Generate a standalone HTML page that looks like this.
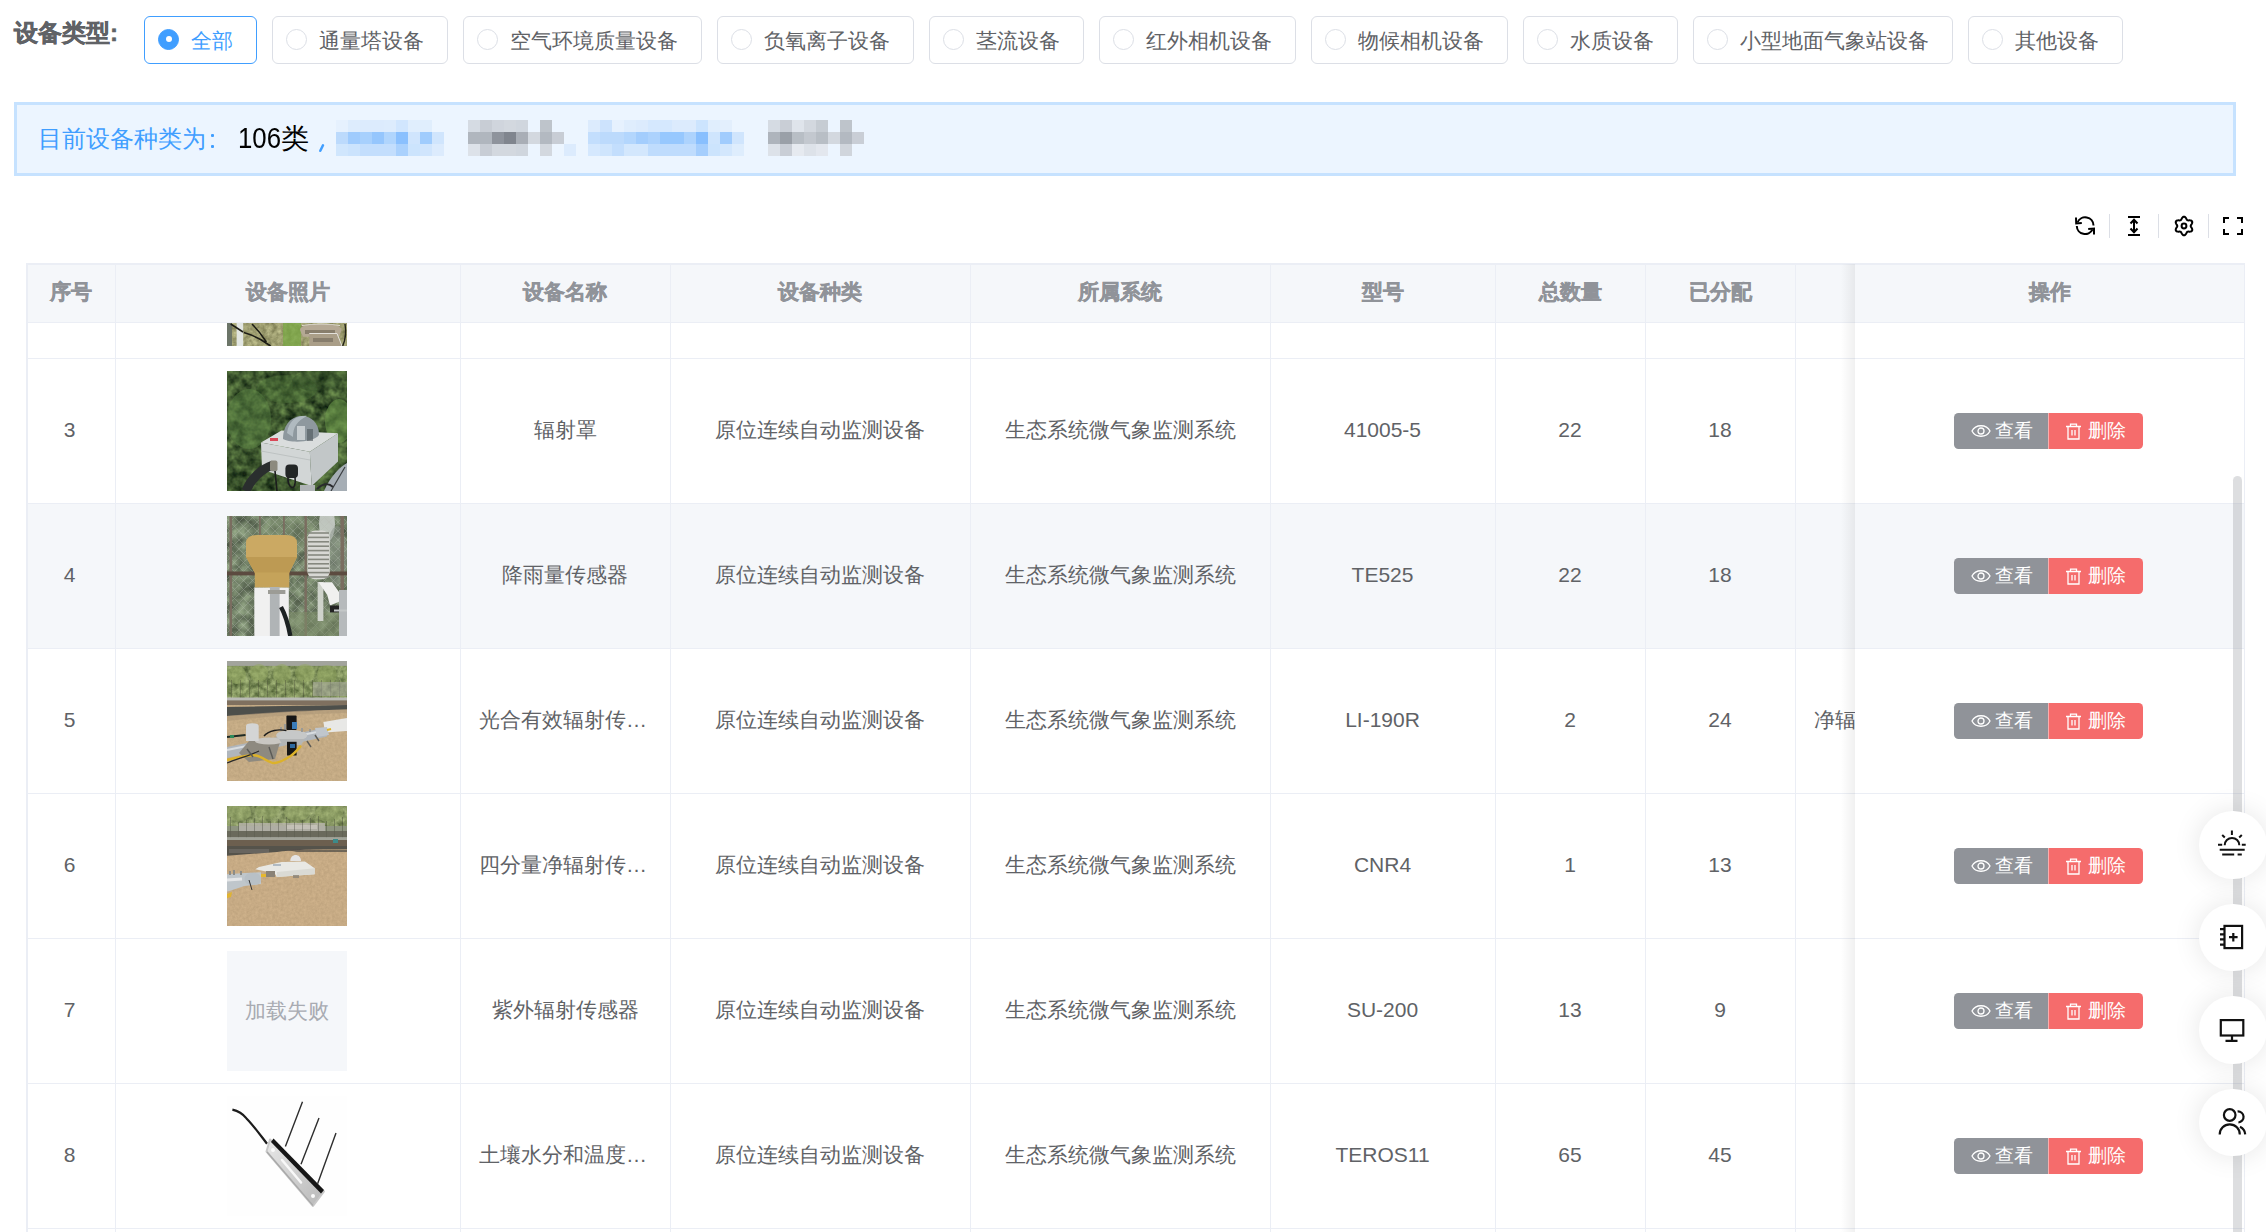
<!DOCTYPE html><html><head><meta charset='utf-8'><style>
*{box-sizing:border-box;margin:0;padding:0}
html,body{width:2266px;height:1232px;overflow:hidden;background:#fff;font-family:'Liberation Sans', sans-serif;}
.a{position:absolute}
.t{position:absolute;white-space:nowrap;line-height:30px;height:30px}
.rb{position:absolute;top:16px;height:48px;border:1px solid #dcdfe6;border-radius:6px;background:#fff}
.rc{position:absolute;top:11.5px;width:21px;height:21px;border:1px solid #dcdfe6;border-radius:50%;background:#fff}
.rl{position:absolute;top:9px;font-size:21px;line-height:30px;color:#606266;white-space:nowrap}
.hd{position:absolute;top:277px;font-size:21px;font-weight:bold;color:#909399;line-height:30px;text-align:center;white-space:nowrap;-webkit-text-stroke:0.45px #909399}
.cell{position:absolute;font-size:21px;color:#606266;line-height:30px;text-align:center;white-space:nowrap;overflow:hidden;text-overflow:ellipsis}
.vl{position:absolute;width:1px;background:#ebeef5}
.hl{position:absolute;height:1px;background:#ebeef5}
.mz{position:absolute;width:12px;height:12px}
.btn{position:absolute;height:36px;font-size:19px;line-height:36px;color:#fff;white-space:nowrap}
.fab{position:absolute;left:2199px;width:67.5px;height:67.5px;border-radius:50%;background:#fff;box-shadow:0 0 28px rgba(0,0,0,0.10)}
</style></head><body><div class='t' style='left:14px;top:18px;font-size:24px;font-weight:bold;color:#606266;-webkit-text-stroke:0.5px #606266'>设备类型:</div><div class='rb' style='left:144.0px;width:112.5px;border-color:#409eff'><div class='rc' style='left:13px;background:#409eff;border-color:#409eff'><div class='a' style='left:6.5px;top:6.5px;width:6px;height:6px;border-radius:50%;background:#fff'></div></div><div class='rl' style='left:46px;color:#409eff'>全部</div></div><div class='rb' style='left:272.0px;width:175.5px;border-color:#dcdfe6'><div class='rc' style='left:13px'></div><div class='rl' style='left:46px'>通量塔设备</div></div><div class='rb' style='left:463.0px;width:238.5px;border-color:#dcdfe6'><div class='rc' style='left:13px'></div><div class='rl' style='left:46px'>空气环境质量设备</div></div><div class='rb' style='left:717.0px;width:196.5px;border-color:#dcdfe6'><div class='rc' style='left:13px'></div><div class='rl' style='left:46px'>负氧离子设备</div></div><div class='rb' style='left:929.0px;width:154.5px;border-color:#dcdfe6'><div class='rc' style='left:13px'></div><div class='rl' style='left:46px'>茎流设备</div></div><div class='rb' style='left:1099.0px;width:196.5px;border-color:#dcdfe6'><div class='rc' style='left:13px'></div><div class='rl' style='left:46px'>红外相机设备</div></div><div class='rb' style='left:1311.0px;width:196.5px;border-color:#dcdfe6'><div class='rc' style='left:13px'></div><div class='rl' style='left:46px'>物候相机设备</div></div><div class='rb' style='left:1523.0px;width:154.5px;border-color:#dcdfe6'><div class='rc' style='left:13px'></div><div class='rl' style='left:46px'>水质设备</div></div><div class='rb' style='left:1693.0px;width:259.5px;border-color:#dcdfe6'><div class='rc' style='left:13px'></div><div class='rl' style='left:46px'>小型地面气象站设备</div></div><div class='rb' style='left:1968.0px;width:154.5px;border-color:#dcdfe6'><div class='rc' style='left:13px'></div><div class='rl' style='left:46px'>其他设备</div></div><div class='a' style='left:14px;top:102px;width:2222px;height:74px;background:#ecf5ff;border:3px solid #c6e2ff'></div><div class='t' style='left:38px;top:124px;font-size:24px;color:#409eff'>目前设备种类为</div><div class='a' style='left:210.5px;top:134px;width:3.7px;height:3.4px;border-radius:1px;background:#409eff'></div><div class='a' style='left:210.5px;top:145px;width:3.7px;height:3.4px;border-radius:1px;background:#409eff'></div><div class='t' style='left:237.5px;top:122.5px;font-size:29px;color:#000;transform:scaleX(0.89);transform-origin:0 0'>106</div><div class='t' style='left:280.5px;top:124px;font-size:28px;color:#000'>类</div><svg class='a' style='left:314px;top:140px' width='14' height='16'><path d='M9 5.3 L6.3 10.8' stroke='#409eff' stroke-width='2.5' stroke-linecap='round'/></svg><div class='mz' style='left:336px;top:120px;background:#e6f1fe'></div><div class='mz' style='left:348px;top:120px;background:#ddecfd'></div><div class='mz' style='left:360px;top:120px;background:#dcebfd'></div><div class='mz' style='left:372px;top:120px;background:#dcebfd'></div><div class='mz' style='left:384px;top:120px;background:#ddecfd'></div><div class='mz' style='left:396px;top:120px;background:#d1e6fe'></div><div class='mz' style='left:408px;top:120px;background:#e0eefd'></div><div class='mz' style='left:420px;top:120px;background:#e0eefd'></div><div class='mz' style='left:336px;top:132px;background:#bcdafc'></div><div class='mz' style='left:348px;top:132px;background:#9fcbfd'></div><div class='mz' style='left:360px;top:132px;background:#a7d0fd'></div><div class='mz' style='left:372px;top:132px;background:#95c6fd'></div><div class='mz' style='left:384px;top:132px;background:#b0d5fd'></div><div class='mz' style='left:396px;top:132px;background:#8ac0fe'></div><div class='mz' style='left:408px;top:132px;background:#d0e5fd'></div><div class='mz' style='left:420px;top:132px;background:#a0ccfd'></div><div class='mz' style='left:432px;top:132px;background:#d0e5fd'></div><div class='mz' style='left:336px;top:144px;background:#d0e6fd'></div><div class='mz' style='left:348px;top:144px;background:#cbe3fd'></div><div class='mz' style='left:360px;top:144px;background:#c3defd'></div><div class='mz' style='left:372px;top:144px;background:#c3defd'></div><div class='mz' style='left:384px;top:144px;background:#c3defd'></div><div class='mz' style='left:396px;top:144px;background:#aad1fd'></div><div class='mz' style='left:408px;top:144px;background:#cce4fd'></div><div class='mz' style='left:420px;top:144px;background:#d0e5fd'></div><div class='mz' style='left:432px;top:144px;background:#dcebfd'></div><div class='mz' style='left:468px;top:120px;background:#d5dbe3'></div><div class='mz' style='left:480px;top:120px;background:#c8cdd5'></div><div class='mz' style='left:492px;top:120px;background:#d0d5dd'></div><div class='mz' style='left:504px;top:120px;background:#d3d8df'></div><div class='mz' style='left:516px;top:120px;background:#d0d6de'></div><div class='mz' style='left:540px;top:120px;background:#bec4cb'></div><div class='mz' style='left:468px;top:132px;background:#b0b6be'></div><div class='mz' style='left:480px;top:132px;background:#b0b6be'></div><div class='mz' style='left:492px;top:132px;background:#8e939c'></div><div class='mz' style='left:504px;top:132px;background:#80858e'></div><div class='mz' style='left:516px;top:132px;background:#a9aeb6'></div><div class='mz' style='left:528px;top:132px;background:#d3d8df'></div><div class='mz' style='left:540px;top:132px;background:#b3b9c1'></div><div class='mz' style='left:552px;top:132px;background:#c8cdd5'></div><div class='mz' style='left:468px;top:144px;background:#dde2e9'></div><div class='mz' style='left:480px;top:144px;background:#c8cdd5'></div><div class='mz' style='left:492px;top:144px;background:#d3d8df'></div><div class='mz' style='left:504px;top:144px;background:#d3d8df'></div><div class='mz' style='left:516px;top:144px;background:#d0d6de'></div><div class='mz' style='left:540px;top:144px;background:#d3d8df'></div><div class='mz' style='left:564px;top:144px;background:#dcebfd'></div><div class='mz' style='left:588px;top:120px;background:#dcebfd'></div><div class='mz' style='left:600px;top:120px;background:#cde3fd'></div><div class='mz' style='left:612px;top:120px;background:#e6f1fe'></div><div class='mz' style='left:624px;top:120px;background:#dfedfd'></div><div class='mz' style='left:636px;top:120px;background:#dcebfd'></div><div class='mz' style='left:648px;top:120px;background:#d5e8fe'></div><div class='mz' style='left:660px;top:120px;background:#d5e8fe'></div><div class='mz' style='left:672px;top:120px;background:#dcebfd'></div><div class='mz' style='left:684px;top:120px;background:#dcebfd'></div><div class='mz' style='left:696px;top:120px;background:#cce4fe'></div><div class='mz' style='left:708px;top:120px;background:#e0eefd'></div><div class='mz' style='left:720px;top:120px;background:#e3effd'></div><div class='mz' style='left:588px;top:132px;background:#c3defd'></div><div class='mz' style='left:600px;top:132px;background:#bcdafc'></div><div class='mz' style='left:612px;top:132px;background:#bcdafc'></div><div class='mz' style='left:624px;top:132px;background:#b3d6fd'></div><div class='mz' style='left:636px;top:132px;background:#a3cdfd'></div><div class='mz' style='left:648px;top:132px;background:#acd2fd'></div><div class='mz' style='left:660px;top:132px;background:#97c8fe'></div><div class='mz' style='left:672px;top:132px;background:#97c8fe'></div><div class='mz' style='left:684px;top:132px;background:#add3fd'></div><div class='mz' style='left:696px;top:132px;background:#88bffe'></div><div class='mz' style='left:708px;top:132px;background:#cfe5fd'></div><div class='mz' style='left:720px;top:132px;background:#a1ccfd'></div><div class='mz' style='left:732px;top:132px;background:#d0e5fd'></div><div class='mz' style='left:588px;top:144px;background:#d5e8fe'></div><div class='mz' style='left:600px;top:144px;background:#cfe5fd'></div><div class='mz' style='left:612px;top:144px;background:#c3defd'></div><div class='mz' style='left:624px;top:144px;background:#d3e7fd'></div><div class='mz' style='left:636px;top:144px;background:#d3e7fd'></div><div class='mz' style='left:648px;top:144px;background:#bfdcfd'></div><div class='mz' style='left:660px;top:144px;background:#bfdcfd'></div><div class='mz' style='left:672px;top:144px;background:#bfdcfd'></div><div class='mz' style='left:684px;top:144px;background:#bfdcfd'></div><div class='mz' style='left:696px;top:144px;background:#a5cefd'></div><div class='mz' style='left:708px;top:144px;background:#cce4fd'></div><div class='mz' style='left:720px;top:144px;background:#d3e7fd'></div><div class='mz' style='left:732px;top:144px;background:#deedfd'></div><div class='mz' style='left:768px;top:120px;background:#d5dbe3'></div><div class='mz' style='left:780px;top:120px;background:#c9ced6'></div><div class='mz' style='left:792px;top:120px;background:#dfe4eb'></div><div class='mz' style='left:804px;top:120px;background:#d3d8df'></div><div class='mz' style='left:816px;top:120px;background:#c6ccd3'></div><div class='mz' style='left:840px;top:120px;background:#bec4cb'></div><div class='mz' style='left:768px;top:132px;background:#aeb4bc'></div><div class='mz' style='left:780px;top:132px;background:#9aa0a8'></div><div class='mz' style='left:792px;top:132px;background:#b8bec5'></div><div class='mz' style='left:804px;top:132px;background:#c3c8cf'></div><div class='mz' style='left:816px;top:132px;background:#b8bec5'></div><div class='mz' style='left:828px;top:132px;background:#d3d8df'></div><div class='mz' style='left:840px;top:132px;background:#b3b9c1'></div><div class='mz' style='left:852px;top:132px;background:#c9ced6'></div><div class='mz' style='left:768px;top:144px;background:#dde2e9'></div><div class='mz' style='left:780px;top:144px;background:#c9ced6'></div><div class='mz' style='left:792px;top:144px;background:#e6eaf0'></div><div class='mz' style='left:804px;top:144px;background:#dde2e9'></div><div class='mz' style='left:816px;top:144px;background:#e3e7ee'></div><div class='mz' style='left:840px;top:144px;background:#d0d5dc'></div>
<svg class='a' style='left:2070px;top:210px' width='190' height='32' viewBox='2070 210 190 32'>
 <g fill='none' stroke='#000' stroke-width='2' stroke-linecap='butt'>
  <path d='M2077.5 222.5 A8.3 8.3 0 0 1 2093.5 225.5'/>
  <path d='M2092.5 229.5 A8.3 8.3 0 0 1 2076.8 226'/>
 </g>
 <path d='M2076 217.5 L2076.2 223.5 L2081.8 223' fill='none' stroke='#000' stroke-width='2'/>
 <path d='M2094 234.5 L2094 228.5 L2088.2 229' fill='none' stroke='#000' stroke-width='2'/>
 <rect x='2109' y='214' width='1' height='24' fill='#dcdfe6'/>
 <rect x='2128' y='216' width='12' height='2' fill='#000'/>
 <rect x='2128' y='234' width='12' height='2' fill='#000'/>
 <path d='M2134 219.5 V232.5' stroke='#000' stroke-width='2'/>
 <path d='M2130.5 223.5 L2134 219.7 L2137.5 223.5 M2130.5 228.5 L2134 232.3 L2137.5 228.5' fill='none' stroke='#000' stroke-width='2'/>
 <rect x='2158' y='214' width='1' height='24' fill='#dcdfe6'/>
 <path d='M2190.70 226.00 L2190.75 226.35 L2190.91 226.73 L2191.15 227.13 L2191.43 227.58 L2191.73 228.07 L2191.99 228.60 L2192.18 229.14 L2192.27 229.68 L2192.23 230.19 L2192.05 230.65 L2191.75 231.03 L2191.32 231.32 L2190.81 231.52 L2190.24 231.62 L2189.66 231.66 L2189.08 231.65 L2188.55 231.62 L2188.08 231.62 L2187.68 231.67 L2187.35 231.80 L2187.07 232.03 L2186.83 232.35 L2186.59 232.76 L2186.35 233.23 L2186.07 233.73 L2185.75 234.22 L2185.37 234.66 L2184.95 235.00 L2184.48 235.22 L2184.00 235.30 L2183.52 235.22 L2183.05 235.00 L2182.63 234.66 L2182.25 234.22 L2181.93 233.73 L2181.65 233.23 L2181.41 232.76 L2181.17 232.35 L2180.93 232.03 L2180.65 231.80 L2180.32 231.67 L2179.92 231.62 L2179.45 231.62 L2178.92 231.65 L2178.34 231.66 L2177.76 231.62 L2177.19 231.52 L2176.68 231.32 L2176.25 231.03 L2175.95 230.65 L2175.77 230.19 L2175.73 229.68 L2175.82 229.14 L2176.01 228.60 L2176.27 228.07 L2176.57 227.58 L2176.85 227.13 L2177.09 226.73 L2177.25 226.35 L2177.30 226.00 L2177.25 225.65 L2177.09 225.27 L2176.85 224.87 L2176.57 224.42 L2176.27 223.93 L2176.01 223.40 L2175.82 222.86 L2175.73 222.32 L2175.77 221.81 L2175.95 221.35 L2176.25 220.97 L2176.68 220.68 L2177.19 220.48 L2177.76 220.38 L2178.34 220.34 L2178.92 220.35 L2179.45 220.38 L2179.92 220.38 L2180.32 220.33 L2180.65 220.20 L2180.93 219.97 L2181.17 219.65 L2181.41 219.24 L2181.65 218.77 L2181.93 218.27 L2182.25 217.78 L2182.63 217.34 L2183.05 217.00 L2183.52 216.78 L2184.00 216.70 L2184.48 216.78 L2184.95 217.00 L2185.37 217.34 L2185.75 217.78 L2186.07 218.27 L2186.35 218.77 L2186.59 219.24 L2186.83 219.65 L2187.07 219.97 L2187.35 220.20 L2187.68 220.33 L2188.08 220.38 L2188.55 220.38 L2189.08 220.35 L2189.66 220.34 L2190.24 220.38 L2190.81 220.48 L2191.32 220.68 L2191.75 220.97 L2192.05 221.35 L2192.23 221.81 L2192.27 222.32 L2192.18 222.86 L2191.99 223.40 L2191.73 223.93 L2191.43 224.42 L2191.15 224.87 L2190.91 225.27 L2190.75 225.65 L2190.70 226.00 Z' fill='none' stroke='#000' stroke-width='2' stroke-linejoin='round'/>
 <circle cx='2184' cy='226' r='2.4' fill='none' stroke='#000' stroke-width='2'/>
 <rect x='2208' y='214' width='1' height='24' fill='#dcdfe6'/>
 <path d='M2224 223 V218 H2229 M2237 218 H2242 V223 M2242 229 V234 H2237 M2229 234 H2224 V229' fill='none' stroke='#000' stroke-width='2'/>
</svg>
<div class='a' style='left:26px;top:263px;width:2218.5px;height:59.5px;background:#f5f7fa'></div><div class='a' style='left:26px;top:503px;width:2218.5px;height:145px;background:#f5f7fa'></div><div class='a' style='left:26px;top:263px;width:2218.5px;height:2px;background:#ebeef5'></div><div class='a' style='left:26px;top:263px;width:2px;height:969px;background:#ebeef5'></div><div class='a' style='left:2243.5px;top:263px;width:1px;height:969px;background:#ebeef5'></div><div class='hl' style='left:26px;top:322px;width:2218.5px'></div><div class='hl' style='left:26px;top:358px;width:2218.5px'></div><div class='hl' style='left:26px;top:503px;width:2218.5px'></div><div class='hl' style='left:26px;top:648px;width:2218.5px'></div><div class='hl' style='left:26px;top:793px;width:2218.5px'></div><div class='hl' style='left:26px;top:938px;width:2218.5px'></div><div class='hl' style='left:26px;top:1083px;width:2218.5px'></div><div class='hl' style='left:26px;top:1228px;width:2218.5px'></div><div class='vl' style='left:115.0px;top:263px;height:969px'></div><div class='vl' style='left:460.0px;top:263px;height:969px'></div><div class='vl' style='left:670.0px;top:263px;height:969px'></div><div class='vl' style='left:970.0px;top:263px;height:969px'></div><div class='vl' style='left:1270.0px;top:263px;height:969px'></div><div class='vl' style='left:1495.0px;top:263px;height:969px'></div><div class='vl' style='left:1645.0px;top:263px;height:969px'></div><div class='vl' style='left:1795.0px;top:263px;height:969px'></div><div class='hd' style='left:26px;width:89px'>序号</div><div class='hd' style='left:115px;width:345px'>设备照片</div><div class='hd' style='left:460px;width:210px'>设备名称</div><div class='hd' style='left:670px;width:300px'>设备种类</div><div class='hd' style='left:970px;width:300px'>所属系统</div><div class='hd' style='left:1270px;width:225px'>型号</div><div class='hd' style='left:1495px;width:150px'>总数量</div><div class='hd' style='left:1645px;width:150px'>已分配</div><div class='a' style='left:227px;top:322.5px;width:120px;height:23.0px;overflow:hidden'><div class='a' style='left:0;top:-97.0px;width:120px;height:120px'><svg width='120' height='120' viewBox='0 0 120 120' style='display:block'><defs><filter id='p2n' x='0' y='0' width='120' height='120' filterUnits='userSpaceOnUse' color-interpolation-filters='sRGB'><feTurbulence type='fractalNoise' baseFrequency='0.2' numOctaves='3' seed='5'/><feColorMatrix type='matrix' values='0.4 0 0 0 0.420  0.4 0 0 0 0.420  0.35 0 0 0 0.265  0 0 0 0 1'/><feComposite in2='SourceGraphic' operator='in'/></filter><filter id='p2b' x='-5%' y='-5%' width='110%' height='110%'><feGaussianBlur stdDeviation='0.7'/></filter></defs><g filter='url(#p2b)'>
<rect x='0' y='90' width='120' height='30' fill='#a09c78'/>
<rect x='0' y='90' width='120' height='30' filter='url(#p2n)'/>
<rect x='56' y='96' width='18' height='24' fill='#78a844' opacity='0.75'/>
<rect x='0' y='96' width='5' height='24' fill='#6c7468'/>
<rect x='9.6' y='96' width='6.6' height='24' fill='#e2e6e2'/>
<path d='M3.7 98 Q10 102 16 106 M16.8 106.5 Q30 110 43.6 120 M25 98 Q33 106 39.4 116' stroke='#1e1e16' stroke-width='1.6' fill='none'/>
<path d='M73 104 Q73 98 94 98 Q114.6 98 114.6 104 L112 110.8 L76 110.8 Z' fill='#b4a894'/>
<path d='M75 99.5 Q94 96.5 113 99.5' stroke='#e0dcd4' stroke-width='1.2' fill='none'/>
<rect x='78' y='104' width='30' height='4' fill='#6a6252' opacity='0.6'/>
<path d='M82.3 107.5 L110 107.5 L115 120 L82.3 120 Z' fill='#aa9e88'/>
<path d='M82.3 107.5 L110 107.5 L115 120' stroke='#e4e2dc' stroke-width='1' fill='none'/>
<rect x='86' y='112' width='20' height='4' fill='#70685a' opacity='0.6'/>
<path d='M118 98 Q120 110 115.7 120' stroke='#202018' stroke-width='1.4' fill='none'/>
</g></svg></div></div><div class='cell' style='left:25px;top:415.0px;width:89px'>3</div><div class='a' style='left:227px;top:370.5px;width:120px;height:120px;overflow:hidden'><svg width='120' height='120' viewBox='0 0 120 120' style='display:block'><defs><filter id='p3n' x='0' y='0' width='120' height='120' filterUnits='userSpaceOnUse' color-interpolation-filters='sRGB'><feTurbulence type='fractalNoise' baseFrequency='0.1' numOctaves='3' seed='7'/><feColorMatrix type='matrix' values='0.6 0 0 0 -0.060  0.7 0 0 0 -0.010  0.4 0 0 0 -0.020  0 0 0 0 1.0'/><feComposite in2='SourceGraphic' operator='in'/></filter><filter id='p3b' x='-5%' y='-5%' width='110%' height='110%'><feGaussianBlur stdDeviation='0.7'/></filter></defs><g filter='url(#p3b)'>
<rect x='0' y='0' width='120' height='120' filter='url(#p3n)'/>
<ellipse cx='22' cy='48' rx='22' ry='30' fill='#5f8a48' opacity='0.45'/>
<ellipse cx='112' cy='50' rx='14' ry='22' fill='#6f9c4c' opacity='0.55'/>
<ellipse cx='60' cy='18' rx='30' ry='14' fill='#527a3c' opacity='0.35'/>
<ellipse cx='90' cy='10' rx='25' ry='10' fill='#2f4726' opacity='0.35'/>
<path d='M34 71.6 L54.5 59.4 L111 62.3 L82.8 80.8 Z' fill='#dadddd'/>
<path d='M34 71.6 L82.8 80.8 L84.7 115 L35 98.4 Z' fill='#d2d6d6'/>
<path d='M82.8 80.8 L111 62.3 L111 90.6 L84.7 115 Z' fill='#c2c7c8'/>
<path d='M34 80 L83 89' stroke='#b8bcbc' stroke-width='0.8'/>
<path d='M56 68 C56 38 92 38 92 64 C86 72 62 72 56 68 Z' fill='#8e989e'/>
<path d='M60 62 C62 48 72 44 80 45 C70 50 66 56 66 66 Z' fill='#b9c3c8' opacity='0.8'/>
<rect x='70' y='55' width='8' height='14' fill='#dfe4e6' opacity='0.7'/>
<rect x='80' y='58' width='6' height='12' fill='#4b5458' opacity='0.6'/>
<rect x='43' y='67' width='8' height='3' fill='#d94858'/>
<path d='M19 120 C24 108 34 98 46 94' stroke='#2b2d2f' stroke-width='9' fill='none'/>
<rect x='43' y='89.5' width='7.5' height='10.8' rx='2' fill='#8c8a7e'/>
<path d='M48 100 L50 120' stroke='#1b1c1d' stroke-width='1.6'/>
<rect x='58.4' y='93.5' width='12.6' height='13.5' rx='4' fill='#232527'/>
<path d='M61 106 C60 118 70 122 68 106' stroke='#1d1e20' stroke-width='1.6' fill='none'/>
<rect x='73' y='114' width='15' height='6' fill='#b0b4b6'/>
<path d='M97 120 C104 104 114 95 120 92 L120 120 Z' fill='#a6aeb5'/>
<path d='M104 120 L118 96' stroke='#3a3d40' stroke-width='1.2'/>
<path d='M90 118 C96 112 102 112 106 116' stroke='#2a2c2e' stroke-width='2' fill='none'/>
</g></svg></div><div class='cell' style='left:475px;top:415.0px;width:180px'>辐射罩</div><div class='cell' style='left:685px;top:415.0px;width:270px'>原位连续自动监测设备</div><div class='cell' style='left:985px;top:415.0px;width:270px'>生态系统微气象监测系统</div><div class='cell' style='left:1285px;top:415.0px;width:195px'>41005-5</div><div class='cell' style='left:1510px;top:415.0px;width:120px'>22</div><div class='cell' style='left:1660px;top:415.0px;width:120px'>18</div><div class='cell' style='left:25px;top:560.0px;width:89px'>4</div><div class='a' style='left:227px;top:515.5px;width:120px;height:120px;overflow:hidden'><svg width='120' height='120' viewBox='0 0 120 120' style='display:block'><defs><filter id='p4n' x='0' y='0' width='120' height='120' filterUnits='userSpaceOnUse' color-interpolation-filters='sRGB'><feTurbulence type='fractalNoise' baseFrequency='0.09' numOctaves='3' seed='11'/><feColorMatrix type='matrix' values='0.45 0 0 0 0.215  0.5 0 0 0 0.250  0.4 0 0 0 0.200  0 0 0 0 1.0'/><feComposite in2='SourceGraphic' operator='in'/></filter><filter id='p4b' x='-5%' y='-5%' width='110%' height='110%'><feGaussianBlur stdDeviation='0.7'/></filter></defs><g filter='url(#p4b)'>
<rect x='0' y='0' width='120' height='120' filter='url(#p4n)'/>
<ellipse cx='100' cy='8' rx='8' ry='18' fill='#c9cec9' opacity='0.9'/>
<ellipse cx='60' cy='20' rx='30' ry='18' fill='#7f9070' opacity='0.4'/>
<ellipse cx='110' cy='40' rx='10' ry='30' fill='#8a938a' opacity='0.5'/>
<g stroke='#b9beb4' stroke-width='0.6' opacity='0.55' fill='none'><path d='M-120 120 L0 0'/><path d='M-111 120 L9 0'/><path d='M-102 120 L18 0'/><path d='M-93 120 L27 0'/><path d='M-84 120 L36 0'/><path d='M-75 120 L45 0'/><path d='M-66 120 L54 0'/><path d='M-57 120 L63 0'/><path d='M-48 120 L72 0'/><path d='M-39 120 L81 0'/><path d='M-30 120 L90 0'/><path d='M-21 120 L99 0'/><path d='M-12 120 L108 0'/><path d='M-3 120 L117 0'/><path d='M6 120 L126 0'/><path d='M15 120 L135 0'/><path d='M24 120 L144 0'/><path d='M33 120 L153 0'/><path d='M42 120 L162 0'/><path d='M51 120 L171 0'/><path d='M60 120 L180 0'/><path d='M69 120 L189 0'/><path d='M78 120 L198 0'/><path d='M87 120 L207 0'/><path d='M96 120 L216 0'/><path d='M105 120 L225 0'/><path d='M114 120 L234 0'/><path d='M-120 0 L0 120'/><path d='M-111 0 L9 120'/><path d='M-102 0 L18 120'/><path d='M-93 0 L27 120'/><path d='M-84 0 L36 120'/><path d='M-75 0 L45 120'/><path d='M-66 0 L54 120'/><path d='M-57 0 L63 120'/><path d='M-48 0 L72 120'/><path d='M-39 0 L81 120'/><path d='M-30 0 L90 120'/><path d='M-21 0 L99 120'/><path d='M-12 0 L108 120'/><path d='M-3 0 L117 120'/><path d='M6 0 L126 120'/><path d='M15 0 L135 120'/><path d='M24 0 L144 120'/><path d='M33 0 L153 120'/><path d='M42 0 L162 120'/><path d='M51 0 L171 120'/><path d='M60 0 L180 120'/><path d='M69 0 L189 120'/><path d='M78 0 L198 120'/><path d='M87 0 L207 120'/><path d='M96 0 L216 120'/><path d='M105 0 L225 120'/><path d='M114 0 L234 120'/></g>
<g fill='#7a6d60'><rect x='2.5' y='0' width='2.6' height='120'/><rect x='32' y='0' width='1.8' height='20'/><rect x='56' y='0' width='1.8' height='20'/><rect x='77.5' y='0' width='2.4' height='120'/><rect x='113.5' y='0' width='3.5' height='120'/></g>
<rect x='60' y='96' width='55' height='24' fill='#7e8e6a' opacity='0.55'/>
<rect x='0' y='55.5' width='120' height='3.9' fill='#5c4c40'/>
<path d='M19 27 Q19 19 30 19 L59 19 Q70 19 70 27 L70 41 L61.8 57.5 L28.2 57.5 L19 41 Z' fill='#cba963'/>
<path d='M19 41 L70 41 L61.8 57.5 L28.2 57.5 Z' fill='#bd9a52'/>
<rect x='27.8' y='56.5' width='34.5' height='15.1' fill='#c5a35a'/>
<rect x='27.3' y='71.6' width='34.5' height='48.4' fill='#f0f0f0'/>
<rect x='42.9' y='71' width='9.7' height='49' fill='#b0b4b6'/>
<rect x='41' y='74' width='17.4' height='4' fill='#9c9c96'/>
<path d='M54 91 C58 98 61 108 63.3 120' stroke='#1e2021' stroke-width='4.4' fill='none'/>
<rect x='80.4' y='14.6' width='22.4' height='48.7' rx='8' fill='#d8d8d4'/>
<g stroke='#86887f' stroke-width='1.6'><path d='M81 17.0 H102'/><path d='M81 21.4 H102'/><path d='M81 25.8 H102'/><path d='M81 30.2 H102'/><path d='M81 34.6 H102'/><path d='M81 39.0 H102'/><path d='M81 43.4 H102'/><path d='M81 47.8 H102'/><path d='M81 52.2 H102'/><path d='M81 56.6 H102'/><path d='M81 61.0 H102'/></g>
<rect x='90.6' y='66' width='5.8' height='39' fill='#cfd3cb'/>
<path d='M91.6 66.2 L105 66.2 L112 76 L112 85.7 L103 89.6 L100.3 78.9 Z' fill='#f0f0ef'/>
<rect x='112' y='74' width='8' height='46' fill='#b6babc'/>
<rect x='103' y='89.6' width='9' height='6.8' fill='#232323'/>
<rect x='107' y='93.5' width='13' height='2' fill='#c4c8c8'/>
</g></svg></div><div class='cell' style='left:475px;top:560.0px;width:180px'>降雨量传感器</div><div class='cell' style='left:685px;top:560.0px;width:270px'>原位连续自动监测设备</div><div class='cell' style='left:985px;top:560.0px;width:270px'>生态系统微气象监测系统</div><div class='cell' style='left:1285px;top:560.0px;width:195px'>TE525</div><div class='cell' style='left:1510px;top:560.0px;width:120px'>22</div><div class='cell' style='left:1660px;top:560.0px;width:120px'>18</div><div class='cell' style='left:25px;top:705.0px;width:89px'>5</div><div class='a' style='left:227px;top:660.5px;width:120px;height:120px;overflow:hidden'><svg width='120' height='120' viewBox='0 0 120 120' style='display:block'><defs><filter id='p5n' x='0' y='0' width='120' height='120' filterUnits='userSpaceOnUse' color-interpolation-filters='sRGB'><feTurbulence type='fractalNoise' baseFrequency='0.35' numOctaves='3' seed='3'/><feColorMatrix type='matrix' values='0.1 0 0 0 0.720  0.09 0 0 0 0.625  0.08 0 0 0 0.480  0 0 0 0 1'/><feComposite in2='SourceGraphic' operator='in'/></filter><filter id='p5t' x='0' y='0' width='120' height='120' filterUnits='userSpaceOnUse' color-interpolation-filters='sRGB'><feTurbulence type='fractalNoise' baseFrequency='0.18' numOctaves='3' seed='9'/><feColorMatrix type='matrix' values='0.5 0 0 0 0.250  0.5 0 0 0 0.320  0.4 0 0 0 0.160  0 0 0 0 1'/><feComposite in2='SourceGraphic' operator='in'/></filter><filter id='p5b' x='-5%' y='-5%' width='110%' height='110%'><feGaussianBlur stdDeviation='0.7'/></filter></defs><g filter='url(#p5b)'>
<rect width='120' height='120' fill='#c4ab85'/>
<rect x='0' y='0' width='120' height='40' fill='#9a9e8e'/>
<rect x='0' y='4' width='120' height='34' filter='url(#p5t)'/>
<rect x='0' y='0' width='120' height='5' fill='#a3a49f' opacity='0.85'/>
<g fill='#93a762' opacity='0.55'><ellipse cx='10' cy='14' rx='9' ry='9'/><ellipse cx='32' cy='12' rx='9' ry='9'/><ellipse cx='55' cy='13' rx='9' ry='10'/><ellipse cx='78' cy='12' rx='10' ry='9'/><ellipse cx='100' cy='14' rx='10' ry='10'/></g>
<rect x='4' y='19' width='1' height='19' fill='#3e4232' opacity='0.35'/><rect x='13' y='19' width='1' height='19' fill='#3e4232' opacity='0.35'/><rect x='22' y='19' width='1' height='19' fill='#3e4232' opacity='0.35'/><rect x='31' y='19' width='1' height='19' fill='#3e4232' opacity='0.35'/><rect x='40' y='19' width='1' height='19' fill='#3e4232' opacity='0.35'/><rect x='49' y='19' width='1' height='19' fill='#3e4232' opacity='0.35'/><rect x='58' y='19' width='1' height='19' fill='#3e4232' opacity='0.35'/><rect x='67' y='19' width='1' height='19' fill='#3e4232' opacity='0.35'/><rect x='76' y='19' width='1' height='19' fill='#3e4232' opacity='0.35'/><rect x='85' y='19' width='1' height='19' fill='#3e4232' opacity='0.35'/><rect x='94' y='19' width='1' height='19' fill='#3e4232' opacity='0.35'/><rect x='103' y='19' width='1' height='19' fill='#3e4232' opacity='0.35'/><rect x='112' y='19' width='1' height='19' fill='#3e4232' opacity='0.35'/>
<rect x='86' y='21' width='34' height='14' fill='#a8a8a0' opacity='0.55'/>
<rect x='0' y='36.5' width='120' height='3' fill='#b9bab5'/>
<rect x='0' y='39.5' width='120' height='6.5' fill='#7f6f5e'/>
<path d='M0 46 L120 44 L120 48.5 Q80 49.5 0 55 Z' fill='#4e4f4c'/>
<rect x='0' y='44' width='120' height='76' filter='url(#p5n)'/>
<path d='M0 46 L120 44 L120 48.5 Q80 49.5 0 55 Z' fill='#4e4f4c'/>
<path d='M0 55 Q60 49 120 48.5 L120 52 Q60 53 0 60 Z' fill='#ae9878' opacity='0.6'/>
<path d='M0 86 L100 66.5 L100 75.5 L0 97 Z' fill='#b0b6bc'/>
<path d='M0 89 L100 69' stroke='#d8dce0' stroke-width='2'/>
<path d='M96.4 61 L120 57 L120 70 L98 71.5 Z' fill='#e8e8e6'/>
<path d='M88 67 L100 66 L102 74 L90 76 Z' fill='#c0c6cc'/>
<path d='M12 92 L22 80 L54 78 L48 98 L22 101 Z' fill='#8e8a80'/>
<ellipse cx='42' cy='80' rx='14' ry='3.6' fill='#c9c7c2'/>
<ellipse cx='64.7' cy='74.4' rx='15.5' ry='5.5' fill='#c6c8c8'/>
<path d='M52 78 L78 78 L74 84 L56 84 Z' fill='#b4b6b6'/>
<path d='M19 65 Q19 62.3 25.3 62.3 Q31.7 62.3 31.7 65 L31.7 80 L19 80 Z' fill='#d4d5d5'/>
<rect x='59.4' y='54.5' width='10.2' height='14.5' rx='1' fill='#161616'/>
<rect x='60' y='80.8' width='9.6' height='13.7' fill='#121212'/>
<rect x='63' y='83' width='5' height='4' fill='#2f6aa0'/>
<rect x='65' y='61' width='5' height='7' fill='#3b7bb8'/>
<g fill='#9a9a96'><rect x='53' y='66' width='2' height='4'/><rect x='57' y='63' width='2' height='6'/><rect x='74' y='67' width='2' height='4'/><rect x='82' y='68' width='2' height='3'/></g>
<path d='M0 99 C10 97 22 93 29 94.5 C36 96 42 102 46.7 102 C53 102 58 98 63 95.5 C68 92 72 87 74 84.7' stroke='#dcb22c' stroke-width='2.4' fill='none'/>
<path d='M0 102 C10 98 24 94 32 90' stroke='#2a2a2a' stroke-width='1.3' fill='none'/>
<path d='M0 76 L18.5 74' stroke='#1f2a26' stroke-width='2.2'/>
<rect x='3' y='74' width='4' height='3' fill='#2f8a5a'/>
<path d='M37 75 C42 69 52 68 59.4 69.6' stroke='#1e1e1e' stroke-width='1.4' fill='none'/>
<path d='M100 69 L104 68' stroke='#dcb22c' stroke-width='2'/>
<g stroke='#5a5a56' stroke-width='1.4'><path d='M20 88 L26 96 M42 86 L46 98 M80 80 L84 86 M88 74 L92 80'/></g>
</g></svg></div><div class='cell' style='left:460px;top:705.0px;width:210px;overflow:visible'><span style='position:relative;left:-2px'>光合有效辐射传…</span></div><div class='cell' style='left:685px;top:705.0px;width:270px'>原位连续自动监测设备</div><div class='cell' style='left:985px;top:705.0px;width:270px'>生态系统微气象监测系统</div><div class='cell' style='left:1285px;top:705.0px;width:195px'>LI-190R</div><div class='cell' style='left:1510px;top:705.0px;width:120px'>2</div><div class='cell' style='left:1660px;top:705.0px;width:120px'>24</div><div class='cell' style='left:1814px;top:705.0px;width:200px;text-align:left'>净辐射</div><div class='cell' style='left:25px;top:850.0px;width:89px'>6</div><div class='a' style='left:227px;top:805.5px;width:120px;height:120px;overflow:hidden'><svg width='120' height='120' viewBox='0 0 120 120' style='display:block'><defs><filter id='p6n' x='0' y='0' width='120' height='120' filterUnits='userSpaceOnUse' color-interpolation-filters='sRGB'><feTurbulence type='fractalNoise' baseFrequency='0.35' numOctaves='3' seed='4'/><feColorMatrix type='matrix' values='0.1 0 0 0 0.730  0.09 0 0 0 0.625  0.08 0 0 0 0.480  0 0 0 0 1'/><feComposite in2='SourceGraphic' operator='in'/></filter><filter id='p6t' x='0' y='0' width='120' height='120' filterUnits='userSpaceOnUse' color-interpolation-filters='sRGB'><feTurbulence type='fractalNoise' baseFrequency='0.18' numOctaves='3' seed='13'/><feColorMatrix type='matrix' values='0.5 0 0 0 0.270  0.5 0 0 0 0.330  0.4 0 0 0 0.180  0 0 0 0 1'/><feComposite in2='SourceGraphic' operator='in'/></filter><filter id='p6b' x='-5%' y='-5%' width='110%' height='110%'><feGaussianBlur stdDeviation='0.7'/></filter></defs><g filter='url(#p6b)'>
<rect width='120' height='120' fill='#c6ad86'/>
<rect x='0' y='0' width='120' height='40' fill='#8e9480'/>
<rect x='0' y='0' width='120' height='20' filter='url(#p6t)'/>
<g fill='#97a96a' opacity='0.5'><ellipse cx='12' cy='6' rx='12' ry='9'/><ellipse cx='40' cy='5' rx='12' ry='8'/><ellipse cx='70' cy='6' rx='13' ry='9'/><ellipse cx='102' cy='7' rx='14' ry='9'/></g>
<rect x='12' y='17' width='86' height='8' fill='#b8b4ac' opacity='0.8'/>
<rect x='60' y='19' width='30' height='4' fill='#d0ccc4' opacity='0.6'/>
<rect x='3' y='11' width='1' height='21' fill='#3a3c30' opacity='0.35'/><rect x='11' y='16' width='1' height='16' fill='#3a3c30' opacity='0.35'/><rect x='19' y='14' width='1' height='18' fill='#3a3c30' opacity='0.35'/><rect x='27' y='12' width='1' height='20' fill='#3a3c30' opacity='0.35'/><rect x='35' y='10' width='1' height='22' fill='#3a3c30' opacity='0.35'/><rect x='43' y='15' width='1' height='17' fill='#3a3c30' opacity='0.35'/><rect x='51' y='13' width='1' height='19' fill='#3a3c30' opacity='0.35'/><rect x='59' y='11' width='1' height='21' fill='#3a3c30' opacity='0.35'/><rect x='67' y='16' width='1' height='16' fill='#3a3c30' opacity='0.35'/><rect x='75' y='14' width='1' height='18' fill='#3a3c30' opacity='0.35'/><rect x='83' y='12' width='1' height='20' fill='#3a3c30' opacity='0.35'/><rect x='91' y='10' width='1' height='22' fill='#3a3c30' opacity='0.35'/><rect x='99' y='15' width='1' height='17' fill='#3a3c30' opacity='0.35'/><rect x='107' y='13' width='1' height='19' fill='#3a3c30' opacity='0.35'/><rect x='115' y='11' width='1' height='21' fill='#3a3c30' opacity='0.35'/>
<rect x='0' y='25' width='120' height='6.5' fill='#5e5e50' opacity='0.75'/>
<rect x='0' y='31' width='120' height='3' fill='#a9aaa2' opacity='0.7'/>
<rect x='0' y='34' width='120' height='6' fill='#6c5e50'/>
<rect x='106' y='33' width='5' height='4' fill='#3c8a8a'/>
<rect x='0' y='40' width='120' height='80' filter='url(#p6n)'/>
<path d='M0 40 L120 40 L120 43 Q70 43 50 46 L0 49.7 Z' fill='#55524c'/><rect x='2' y='43' width='40' height='4' fill='#8a8a84' opacity='0.35'/>
<path d='M60 44 L120 43.5 L120 46 L70 46 Z' fill='#4a4844' opacity='0.7'/>
<path d='M28.2 63.3 L32 61 L54.5 56 L78 55.5 L87.7 62.3 L87.7 68.2 L49.7 71.1 L47.7 67.2 Z' fill='#e8e8e4'/>
<path d='M50 66 L87.7 62.3 L87.7 68.2 L49.7 71.1 Z' fill='#dadad4'/>
<path d='M63.3 55 C63.3 47 74 47 74 55 Z' fill='#e4e4e4'/>
<rect x='46' y='58' width='8' height='2' fill='#9aa6b4' opacity='0.7'/>
<path d='M0 68.2 L17.5 67 L34 66.2 L34 78 L17.5 80 L0 85.7 Z' fill='#bfc6cb'/>
<rect x='17.5' y='67' width='16.5' height='12' rx='6' fill='#b8c0c6'/>
<path d='M0 74 L15 73' stroke='#e4e6e8' stroke-width='3'/>
<g fill='#8c8c88'><rect x='2' y='65' width='2' height='4'/><rect x='6' y='64' width='2' height='5'/><rect x='13' y='65' width='2' height='4'/></g>
<path d='M22 74 L25 84' stroke='#333' stroke-width='1'/>
<path d='M0 88 L5 86 L4 91 L0 92 Z' fill='#e0b430'/>
<rect x='34' y='68' width='5' height='3' fill='#e6b82e'/>
<rect x='39' y='65' width='9' height='6' fill='#8a8276'/>
<rect x='66' y='69' width='6' height='3' fill='#8a8276' opacity='0.8'/>
</g></svg></div><div class='cell' style='left:460px;top:850.0px;width:210px;overflow:visible'><span style='position:relative;left:-2px'>四分量净辐射传…</span></div><div class='cell' style='left:685px;top:850.0px;width:270px'>原位连续自动监测设备</div><div class='cell' style='left:985px;top:850.0px;width:270px'>生态系统微气象监测系统</div><div class='cell' style='left:1285px;top:850.0px;width:195px'>CNR4</div><div class='cell' style='left:1510px;top:850.0px;width:120px'>1</div><div class='cell' style='left:1660px;top:850.0px;width:120px'>13</div><div class='cell' style='left:25px;top:995.0px;width:89px'>7</div><div class='a' style='left:227px;top:950.5px;width:120px;height:120px;overflow:hidden'><div style='width:120px;height:120px;background:#f5f7fa;color:#a8abb2;font-size:21px;line-height:120px;text-align:center'>加载失败</div></div><div class='cell' style='left:475px;top:995.0px;width:180px'>紫外辐射传感器</div><div class='cell' style='left:685px;top:995.0px;width:270px'>原位连续自动监测设备</div><div class='cell' style='left:985px;top:995.0px;width:270px'>生态系统微气象监测系统</div><div class='cell' style='left:1285px;top:995.0px;width:195px'>SU-200</div><div class='cell' style='left:1510px;top:995.0px;width:120px'>13</div><div class='cell' style='left:1660px;top:995.0px;width:120px'>9</div><div class='cell' style='left:25px;top:1140.0px;width:89px'>8</div><div class='a' style='left:227px;top:1095.5px;width:120px;height:120px;overflow:hidden'><svg width='120' height='120' viewBox='0 0 120 120' style='display:block'><defs><linearGradient id='p8g' x1='0' y1='0' x2='1' y2='1'><stop offset='0' stop-color='#e8e8e8'/><stop offset='1' stop-color='#b8b8b8'/></linearGradient><filter id='p8b' x='-5%' y='-5%' width='110%' height='110%'><feGaussianBlur stdDeviation='0.7'/></filter></defs><g filter='url(#p8b)'>
<rect width='120' height='120' fill='#fefefe'/>
<path d='M5.4 13.6 C12 15 16 18 19.5 22.4 C27 30 34 40 40 47.7' stroke='#1a1a1a' stroke-width='2.2' fill='none'/>
<path d='M58.4 50.6 L75.5 5.8 M74 68.2 L92 21.9 M90.6 87.7 L109 37' stroke='#2e2e2e' stroke-width='1.4'/>
<path d='M43 43.5 L97 95.5 L86 110 L39.5 55.5 Z' fill='url(#p8g)' stroke='#c8c8c8' stroke-width='2' stroke-linejoin='round'/>
<path d='M46.5 42.5 L97 94 L94 97.5 L44 46 Z' fill='#161616'/>
<path d='M55 64 L74 86.5' stroke='#f8f8f8' stroke-width='2.5' stroke-linecap='round'/>
<path d='M40 56 L86 109.5' stroke='#a8a8a8' stroke-width='1.2'/>
<circle cx='46' cy='54' r='2' fill='#fafafa'/><circle cx='86' cy='100' r='2' fill='#fafafa'/>
</g></svg></div><div class='cell' style='left:460px;top:1140.0px;width:210px;overflow:visible'><span style='position:relative;left:-2px'>土壤水分和温度…</span></div><div class='cell' style='left:685px;top:1140.0px;width:270px'>原位连续自动监测设备</div><div class='cell' style='left:985px;top:1140.0px;width:270px'>生态系统微气象监测系统</div><div class='cell' style='left:1285px;top:1140.0px;width:195px'>TEROS11</div><div class='cell' style='left:1510px;top:1140.0px;width:120px'>65</div><div class='cell' style='left:1660px;top:1140.0px;width:120px'>45</div><div class='a' style='left:1841px;top:264px;width:14px;height:969px;background:linear-gradient(to right,rgba(0,0,0,0),rgba(0,0,0,0.06))'></div><div class='a' style='left:1855px;top:263px;width:389.5px;height:969px;background:#fff;overflow:hidden'><div class='a' style='left:0;top:0;width:100%;height:59.5px;background:#f5f7fa'></div><div class='a' style='left:0;top:240px;width:100%;height:145px;background:#f5f7fa'></div><div class='a' style='left:0;top:0;width:100%;height:2px;background:#ebeef5'></div><div class='hl' style='left:0;top:59px;width:100%'></div><div class='hl' style='left:0;top:95px;width:100%'></div><div class='hl' style='left:0;top:240px;width:100%'></div><div class='hl' style='left:0;top:385px;width:100%'></div><div class='hl' style='left:0;top:530px;width:100%'></div><div class='hl' style='left:0;top:675px;width:100%'></div><div class='hl' style='left:0;top:820px;width:100%'></div><div class='hl' style='left:0;top:965px;width:100%'></div><div class='a' style='right:0;top:0;width:1px;height:100%;background:#ebeef5'></div><div class='hd' style='left:0;top:14px;width:389.5px'>操作</div><div class='btn' style='left:99px;top:149.5px;width:94px;background:#909399;border-radius:4.5px 0 0 4.5px'><svg class='a' style='left:17px;top:11px' width='20' height='14' viewBox='0 0 20 14'><path d='M1 7 C4.5 0 15.5 0 19 7 C15.5 14 4.5 14 1 7 Z' fill='none' stroke='#fff' stroke-width='1.3'/><circle cx='10' cy='7' r='3' fill='none' stroke='#fff' stroke-width='1.3'/></svg><span class='a' style='left:40.5px;top:0'>查看</span></div><div class='btn' style='left:193px;top:149.5px;width:95px;background:#f56c6c;border-radius:0 4.5px 4.5px 0'><svg class='a' style='left:17px;top:10px' width='17' height='17' viewBox='0 0 17 17'><path d='M1 3.5 H16 M5.5 3.5 V1.2 H11.5 V3.5 M3 3.5 V16 H14 V3.5 M7 7 V12.5 M10 7 V12.5' fill='none' stroke='#fff' stroke-width='1.3'/></svg><span class='a' style='left:40px;top:0'>删除</span><div class='a' style='left:0;top:0;width:1px;height:36px;background:rgba(255,255,255,0.45)'></div></div><div class='btn' style='left:99px;top:294.5px;width:94px;background:#909399;border-radius:4.5px 0 0 4.5px'><svg class='a' style='left:17px;top:11px' width='20' height='14' viewBox='0 0 20 14'><path d='M1 7 C4.5 0 15.5 0 19 7 C15.5 14 4.5 14 1 7 Z' fill='none' stroke='#fff' stroke-width='1.3'/><circle cx='10' cy='7' r='3' fill='none' stroke='#fff' stroke-width='1.3'/></svg><span class='a' style='left:40.5px;top:0'>查看</span></div><div class='btn' style='left:193px;top:294.5px;width:95px;background:#f56c6c;border-radius:0 4.5px 4.5px 0'><svg class='a' style='left:17px;top:10px' width='17' height='17' viewBox='0 0 17 17'><path d='M1 3.5 H16 M5.5 3.5 V1.2 H11.5 V3.5 M3 3.5 V16 H14 V3.5 M7 7 V12.5 M10 7 V12.5' fill='none' stroke='#fff' stroke-width='1.3'/></svg><span class='a' style='left:40px;top:0'>删除</span><div class='a' style='left:0;top:0;width:1px;height:36px;background:rgba(255,255,255,0.45)'></div></div><div class='btn' style='left:99px;top:439.5px;width:94px;background:#909399;border-radius:4.5px 0 0 4.5px'><svg class='a' style='left:17px;top:11px' width='20' height='14' viewBox='0 0 20 14'><path d='M1 7 C4.5 0 15.5 0 19 7 C15.5 14 4.5 14 1 7 Z' fill='none' stroke='#fff' stroke-width='1.3'/><circle cx='10' cy='7' r='3' fill='none' stroke='#fff' stroke-width='1.3'/></svg><span class='a' style='left:40.5px;top:0'>查看</span></div><div class='btn' style='left:193px;top:439.5px;width:95px;background:#f56c6c;border-radius:0 4.5px 4.5px 0'><svg class='a' style='left:17px;top:10px' width='17' height='17' viewBox='0 0 17 17'><path d='M1 3.5 H16 M5.5 3.5 V1.2 H11.5 V3.5 M3 3.5 V16 H14 V3.5 M7 7 V12.5 M10 7 V12.5' fill='none' stroke='#fff' stroke-width='1.3'/></svg><span class='a' style='left:40px;top:0'>删除</span><div class='a' style='left:0;top:0;width:1px;height:36px;background:rgba(255,255,255,0.45)'></div></div><div class='btn' style='left:99px;top:584.5px;width:94px;background:#909399;border-radius:4.5px 0 0 4.5px'><svg class='a' style='left:17px;top:11px' width='20' height='14' viewBox='0 0 20 14'><path d='M1 7 C4.5 0 15.5 0 19 7 C15.5 14 4.5 14 1 7 Z' fill='none' stroke='#fff' stroke-width='1.3'/><circle cx='10' cy='7' r='3' fill='none' stroke='#fff' stroke-width='1.3'/></svg><span class='a' style='left:40.5px;top:0'>查看</span></div><div class='btn' style='left:193px;top:584.5px;width:95px;background:#f56c6c;border-radius:0 4.5px 4.5px 0'><svg class='a' style='left:17px;top:10px' width='17' height='17' viewBox='0 0 17 17'><path d='M1 3.5 H16 M5.5 3.5 V1.2 H11.5 V3.5 M3 3.5 V16 H14 V3.5 M7 7 V12.5 M10 7 V12.5' fill='none' stroke='#fff' stroke-width='1.3'/></svg><span class='a' style='left:40px;top:0'>删除</span><div class='a' style='left:0;top:0;width:1px;height:36px;background:rgba(255,255,255,0.45)'></div></div><div class='btn' style='left:99px;top:729.5px;width:94px;background:#909399;border-radius:4.5px 0 0 4.5px'><svg class='a' style='left:17px;top:11px' width='20' height='14' viewBox='0 0 20 14'><path d='M1 7 C4.5 0 15.5 0 19 7 C15.5 14 4.5 14 1 7 Z' fill='none' stroke='#fff' stroke-width='1.3'/><circle cx='10' cy='7' r='3' fill='none' stroke='#fff' stroke-width='1.3'/></svg><span class='a' style='left:40.5px;top:0'>查看</span></div><div class='btn' style='left:193px;top:729.5px;width:95px;background:#f56c6c;border-radius:0 4.5px 4.5px 0'><svg class='a' style='left:17px;top:10px' width='17' height='17' viewBox='0 0 17 17'><path d='M1 3.5 H16 M5.5 3.5 V1.2 H11.5 V3.5 M3 3.5 V16 H14 V3.5 M7 7 V12.5 M10 7 V12.5' fill='none' stroke='#fff' stroke-width='1.3'/></svg><span class='a' style='left:40px;top:0'>删除</span><div class='a' style='left:0;top:0;width:1px;height:36px;background:rgba(255,255,255,0.45)'></div></div><div class='btn' style='left:99px;top:874.5px;width:94px;background:#909399;border-radius:4.5px 0 0 4.5px'><svg class='a' style='left:17px;top:11px' width='20' height='14' viewBox='0 0 20 14'><path d='M1 7 C4.5 0 15.5 0 19 7 C15.5 14 4.5 14 1 7 Z' fill='none' stroke='#fff' stroke-width='1.3'/><circle cx='10' cy='7' r='3' fill='none' stroke='#fff' stroke-width='1.3'/></svg><span class='a' style='left:40.5px;top:0'>查看</span></div><div class='btn' style='left:193px;top:874.5px;width:95px;background:#f56c6c;border-radius:0 4.5px 4.5px 0'><svg class='a' style='left:17px;top:10px' width='17' height='17' viewBox='0 0 17 17'><path d='M1 3.5 H16 M5.5 3.5 V1.2 H11.5 V3.5 M3 3.5 V16 H14 V3.5 M7 7 V12.5 M10 7 V12.5' fill='none' stroke='#fff' stroke-width='1.3'/></svg><span class='a' style='left:40px;top:0'>删除</span><div class='a' style='left:0;top:0;width:1px;height:36px;background:rgba(255,255,255,0.45)'></div></div></div><div class='a' style='left:2233px;top:476px;width:9px;height:800px;border-radius:4.5px;background:rgba(144,147,153,0.3)'></div><div class='fab' style='top:811.25px'><svg class='a' style='left:15px;top:15px' width='38' height='38' viewBox='0 0 38 38'><g fill='none' stroke='#111' stroke-width='2'><path d='M10.7 19.2 A7.3 7.3 0 0 1 25.3 19.2'/><path d='M17.9 4.6 V9 M8.2 9 L10.8 11.5 M27.8 9 L25.2 11.5 M4 18.7 H8.2 M27.8 18.7 H31.7 M5.7 23.75 H30.7 M8.2 28.5 H20.2 M23.6 28.5 H27.8'/></g></svg></div><div class='fab' style='top:903.75px'><svg class='a' style='left:15px;top:15px' width='38' height='38' viewBox='0 0 38 38'><g fill='none' stroke='#111' stroke-width='2.2'><rect x='10.5' y='6.9' width='17.6' height='22.2'/><path d='M15 18.2 H23.6 M19.3 13.9 V22.5 M6 10.1 H10.5 M6 15.3 H10.5 M6 20.4 H10.5 M6 25.6 H10.5'/></g></svg></div><div class='fab' style='top:996.25px'><svg class='a' style='left:15px;top:15px' width='38' height='38' viewBox='0 0 38 38'><g fill='none' stroke='#111' stroke-width='2.2'><rect x='6.8' y='9.1' width='22.5' height='15.4'/><path d='M18 24.5 V29.8 M11.5 29.8 H23.5'/></g></svg></div><div class='fab' style='top:1088.75px'><svg class='a' style='left:15px;top:15px' width='38' height='38' viewBox='0 0 38 38'><g fill='none' stroke='#111' stroke-width='2.2'><circle cx='15.7' cy='11' r='5.8'/><path d='M5.7 30.4 A10 10 0 0 1 25.8 30.4'/><path d='M23.6 7.4 A5.5 5.5 0 0 1 24.4 18.5'/><path d='M26 22.8 A9 9 0 0 1 31.2 30.4'/></g></svg></div></body></html>
